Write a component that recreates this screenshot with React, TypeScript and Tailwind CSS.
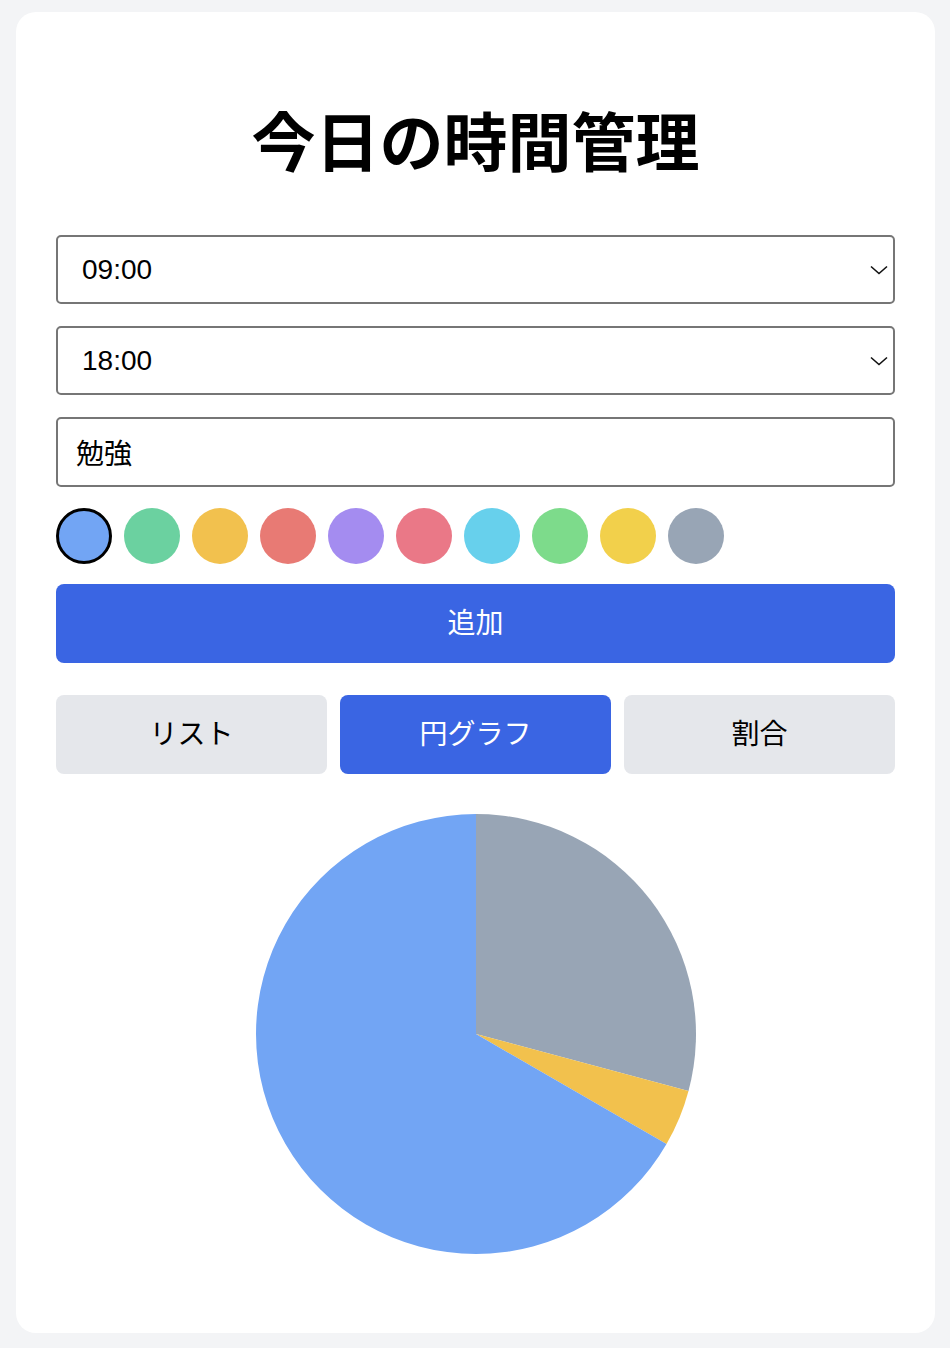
import { useState } from "react";

const COLORS = [
    "#72a5f4",
    "#6bd1a0",
    "#f2c14e",
    "#e87a74",
    "#a48cf0",
    "#ea7887",
    "#67d0ec",
    "#7ddb8b",
    "#f2d04b",
    "#98a5b5",
];

const TIMES = Array.from({ length: 24 }, (_, h) => `${String(h).padStart(2, "0")}:00`);

// hours per slice, drawn clockwise from 12 o'clock
const SLICES = [
    { hours: 7, color: "#98a5b5" },
    { hours: 1, color: "#f2c14d" },
    { hours: 16, color: "#72a5f4" },
];

const PieChart = () => {
    const r = 220;
    const total = SLICES.reduce((s, x) => s + x.hours, 0);
    let start = 0;

    const point = (deg: number) => {
        const rad = (deg * Math.PI) / 180;
        return `${r + r * Math.sin(rad)} ${r - r * Math.cos(rad)}`;
    };

    return (
        <svg width={r * 2} height={r * 2} viewBox={`0 0 ${r * 2} ${r * 2}`}>
            {SLICES.map((s, i) => {
                const sweep = (s.hours / total) * 360;
                const end = start + sweep;
                const d = `M${r} ${r} L${point(start)} A${r} ${r} 0 ${sweep > 180 ? 1 : 0} 1 ${point(end)} Z`;
                start = end;
                return <path key={i} d={d} fill={s.color} />;
            })}
        </svg>
    );
};

const TimeSelect = ({ value }: { value: string }) => (
    <div className="relative">
        <select
            defaultValue={value}
            className="w-full h-[69px] appearance-none border-2 border-[#767676] rounded-[5px] bg-white pl-6 text-[28px] text-black outline-none"
        >
            {TIMES.map((t) => (
                <option key={t} value={t}>
                    {t}
                </option>
            ))}
        </select>
        <svg
            className="pointer-events-none absolute right-[7px] top-1/2 -translate-y-1/2"
            width="18"
            height="10"
            viewBox="0 0 18 10"
            fill="none"
        >
            <path d="M1 1.5 L9 8.5 L17 1.5" stroke="#111" strokeWidth="1.6" />
        </svg>
    </div>
);

const App = () => {
    const [color, setColor] = useState(0);
    const [tab, setTab] = useState("円グラフ");

    return (
        <div className="min-h-screen bg-[#f3f4f6] pl-4 pr-[15px] pt-3 pb-[15px] font-['Liberation_Sans','Noto_Sans_CJK_JP',sans-serif]">
            <div className="rounded-[20px] bg-white px-10 pt-[94px] pb-[79px]">
                <h1 className="text-center text-[64px] font-bold leading-[77px] text-black mb-[52px]">
                    今日の時間管理
                </h1>

                <div className="flex flex-col">
                    <TimeSelect value="09:00" />
                    <div className="mt-[22px]">
                        <TimeSelect value="18:00" />
                    </div>
                    <input
                        defaultValue="勉強"
                        className="mt-[22px] h-[70px] w-full border-2 border-[#767676] rounded-[5px] pl-[18px] pr-5 text-[28px] text-black outline-none"
                    />

                    <div className="mt-[21px] flex gap-3">
                        {COLORS.map((c, i) => (
                            <button
                                key={c}
                                onClick={() => setColor(i)}
                                className={`h-14 w-14 rounded-full ${i === color ? "border-[3px] border-black" : ""}`}
                                style={{ backgroundColor: c }}
                            />
                        ))}
                    </div>

                    <button className="mt-5 h-[79px] w-full rounded-[8px] bg-[#3a65e3] text-[28px] text-white">
                        追加
                    </button>
                </div>

                <div className="mt-8 grid grid-cols-3 gap-[13px]">
                    {["リスト", "円グラフ", "割合"].map((t) => (
                        <button
                            key={t}
                            onClick={() => setTab(t)}
                            className={`h-[79px] rounded-[8px] text-[28px] ${
                                tab === t ? "bg-[#3a65e3] text-white" : "bg-[#e5e7eb] text-black"
                            }`}
                        >
                            {t}
                        </button>
                    ))}
                </div>

                <div className="mt-10 flex justify-center">
                    <PieChart />
                </div>
            </div>
        </div>
    );
};

export default App;
